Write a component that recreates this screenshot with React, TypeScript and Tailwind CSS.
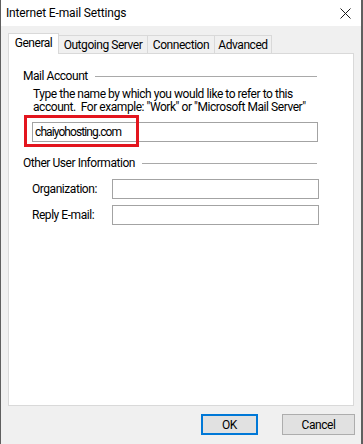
import React from "react";

function GroupHeader({ label }: { label: string }) {
  return (
    <div className="flex items-center h-[16px] pl-[14px] pr-[36px]">
      <span className="whitespace-nowrap">{label}</span>
      <div className="flex-1 h-px bg-[#a9a9a9] ml-[7px]" />
    </div>
  );
}

function Field({ label }: { label: string }) {
  return (
    <div className="flex items-center pl-[23px]">
      <span className="w-[80px] whitespace-nowrap">{label}</span>
      <div className="w-[207px] h-[20px] border border-[#a3a3a3] bg-white" />
    </div>
  );
}

export default function App() {
  return (
    <div className="w-[363px] h-[444px] bg-[#f0f0f0] border-l border-r-2 border-[#5f5f5f] flex flex-col font-['Roboto',sans-serif] text-[12px] tracking-[-0.45px] text-black overflow-hidden">
      {/* Title bar */}
      <div className="h-[26px] bg-white flex items-center justify-between pl-[5px] pr-[10px]">
        <span className="leading-[16px] tracking-[-0.15px]">Internet E-mail Settings</span>
        <svg width="11" height="11" viewBox="0 0 11 11">
          <path d="M0.5 0.5 L10.5 10.5 M10.5 0.5 L0.5 10.5" stroke="#1a1a1a" strokeWidth="1" fill="none" />
        </svg>
      </div>

      {/* Tabs */}
      <div className="pt-[7px] pl-[7px] flex items-end h-[27px] whitespace-nowrap">
        <div className="relative z-10 w-[51px] h-[21px] -mb-px bg-white border border-b-0 border-[#d9d9d9] flex items-start justify-center pt-[1px] leading-[16px]">
          General
        </div>
        <div className="w-[89px] h-[18px] border-t border-r border-[#d9d9d9] flex items-center justify-center leading-[16px]">
          Outgoing Server
        </div>
        <div className="w-[67px] h-[18px] border-t border-r border-[#d9d9d9] flex items-center justify-center leading-[16px]">
          Connection
        </div>
        <div className="w-[57px] h-[18px] border-t border-r border-[#d9d9d9] flex items-center justify-center leading-[16px]">
          Advanced
        </div>
      </div>

      {/* Panel */}
      <div className="ml-[7px] w-[346px] h-[353px] bg-white border border-[#d9d9d9] flex flex-col">
        <div className="mt-[14px]">
          <GroupHeader label="Mail Account" />
        </div>
        <div className="mt-[4px] pl-[24px] leading-[13px] whitespace-nowrap">
          <div>Type the name by which you would like to refer to this</div>
          <div>account.&nbsp; For example: "Work" or "Microsoft Mail Server"</div>
        </div>
        <div className="mt-[8px] ml-[23px] relative w-[286px] h-[20px]">
          <div className="w-full h-full border border-[#a3a3a3] bg-white flex items-center pl-[2px] leading-[16px] tracking-[-0.9px]">
            chaiyohosting.com
          </div>
          <div className="absolute left-[-8px] top-[-7px] w-[115px] h-[32px] border-[3px] border-[#e3151e]" />
        </div>
        <div className="mt-[13px]">
          <GroupHeader label="Other User Information" />
        </div>
        <div className="mt-[8px] flex flex-col gap-[6px]">
          <Field label="Organization:" />
          <Field label="Reply E-mail:" />
        </div>
      </div>

      {/* Buttons */}
      <div className="mt-[8px] flex justify-end pr-[6px] gap-[24px]">
        <button className="w-[57px] h-[21px] bg-[#e1e1e1] border-2 border-[#0078d7] leading-[16px]">
          OK
        </button>
        <button className="w-[73px] h-[21px] bg-[#e1e1e1] border border-[#adadad] leading-[16px]">
          Cancel
        </button>
      </div>
    </div>
  );
}
